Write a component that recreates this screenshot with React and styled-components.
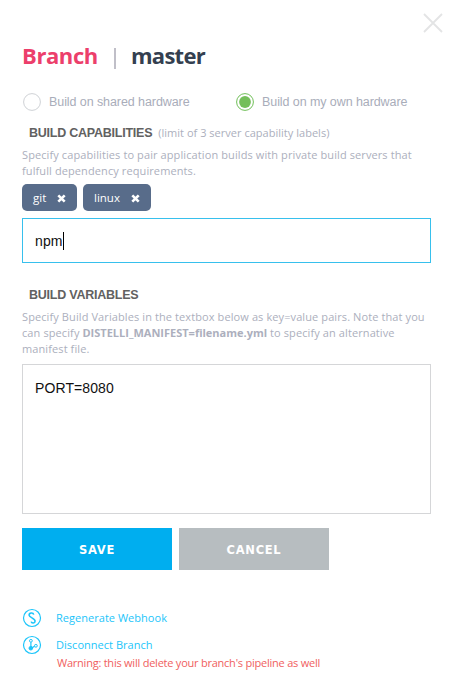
import React from "react";
import styled, { createGlobalStyle } from "styled-components";

const Global = createGlobalStyle`
  * { box-sizing: border-box; }
  body { margin: 0; background: #fff; font-family: "Open Sans", "Noto Sans", sans-serif; }
`;

const Panel = styled.main`
  width: 458px;
  height: 692px;
  padding: 13px 27px 0 22px;
  display: flex;
  flex-direction: column;
  background: #fff;
`;

const CloseButton = styled.button`
  align-self: flex-end;
  width: 20px;
  height: 20px;
  margin-right: -12px;
  padding: 0;
  border: 0;
  background: none;
  svg { display: block; }
`;

const Title = styled.h1`
  display: flex;
  align-items: center;
  height: 30px;
  margin: 7px 0 0;
  font-size: 22px;
  line-height: 30px;
  font-weight: 700;
  letter-spacing: -0.7px;
  color: #343f50;
`;

const Accent = styled.span`
  color: #ec3f6b;
  letter-spacing: -0.4px;
`;

const Divider = styled.span`
  width: 2px;
  height: 21px;
  margin: 6px 15px 0 16px;
  background: #c0bfc8;
`;

const Options = styled.div`
  display: flex;
  height: 20px;
  margin-top: 22px;
`;

const Option = styled.label`
  display: flex;
  flex: none;
  align-items: center;
  width: 213px;
  gap: 7px;
  white-space: nowrap;
  font: 12.5px/20px "Liberation Sans", Arial, sans-serif;
  letter-spacing: -0.08px;
  color: #a9adba;
  svg { flex: none; }
`;

const Heading = styled.h2`
  display: flex;
  align-items: baseline;
  gap: 6px;
  height: 18px;
  margin: ${(p) => p.$top}px 0 0 7px;
  font: 700 12.5px/18px "Liberation Sans", Arial, sans-serif;
  letter-spacing: -0.24px;
  color: #616161;
`;

const Hint = styled.span`
  font: 400 11px/18px "Open Sans", sans-serif;
  letter-spacing: 0.02px;
  color: #acafbd;
`;

const Description = styled.p`
  margin: 5px 0 0;
  font-size: 11px;
  line-height: 16px;
  letter-spacing: 0.1px;
  color: #acafbd;
  white-space: nowrap;
  b { letter-spacing: 0; }
`;

const Tags = styled.div`
  display: flex;
  gap: 6px;
  height: 27px;
  margin-top: 5px;
`;

const Tag = styled.span`
  display: flex;
  align-items: center;
  justify-content: space-between;
  width: ${(p) => p.$width}px;
  padding: 0 11px;
  border-radius: 5px;
  background: #586c8a;
  color: #fff;
  font-size: 11.5px;
  svg { display: block; margin-top: 1px; }
`;

const Field = styled.div`
  display: flex;
  align-items: ${(p) => (p.$multiline ? "flex-start" : "center")};
  width: 409px;
  height: ${(p) => (p.$multiline ? 150 : 45)}px;
  margin-top: 7px;
  padding: ${(p) => (p.$multiline ? "13px 12px" : "0 12px")};
  border: 1px solid ${(p) => (p.$focused ? "#37c0ed" : "#d5d6d8")};
  font: 14px/20px "Liberation Sans", Arial, sans-serif;
  letter-spacing: 0.1px;
  color: #111;
`;

const Caret = styled.span`
  width: 1px;
  height: 18px;
  background: #000;
`;

const Actions = styled.div`
  display: flex;
  gap: 7px;
  margin-top: 14px;
`;

const Action = styled.button`
  width: 150px;
  height: 42px;
  padding: 2px 0 0;
  border: 0;
  background: ${(p) => (p.$primary ? "#00aeef" : "#b7bdc0")};
  color: #fff;
  font: 700 11.5px/40px "DejaVu Sans", sans-serif;
  letter-spacing: 0.7px;
`;

const Links = styled.nav`
  display: flex;
  flex-direction: column;
  gap: 7px;
  margin-top: 38px;
`;

const Link = styled.a`
  display: flex;
  align-items: center;
  height: 20px;
  gap: 14px;
  font-size: 11px;
  line-height: 18px;
  letter-spacing: 0.03px;
  color: #1cc5fa;
`;

const Warning = styled.p`
  margin: 0 0 0 35px;
  font-size: 11px;
  line-height: 16px;
  letter-spacing: -0.23px;
  color: #f0605e;
`;

const Radio = ({ checked }) => (
  <svg width="20" height="20" viewBox="0 0 20 20">
    <circle cx="10" cy="10" r="8.4" fill="#fff" stroke={checked ? "#71bf59" : "#cfd2d6"} />
    {checked && <circle cx="10" cy="10" r="5.9" fill="#74bf5a" />}
  </svg>
);

const TagCross = () => (
  <svg width="9" height="9" viewBox="0 0 9 9">
    <path d="M1.3 1.3 7.7 7.7M7.7 1.3 1.3 7.7" stroke="#fff" strokeWidth="2.6" />
  </svg>
);

const WebhookIcon = () => (
  <svg width="20" height="20" viewBox="0 0 20 20" fill="none" stroke="#1cc5fa">
    <circle cx="10" cy="10" r="8.5" strokeWidth="1.2" />
    <path d="M11.7 6.6C11.2 4.3 7.1 4.5 7.1 7.2C7.1 9.3 13.2 10.6 13.1 13C13 15.6 9.6 15.6 9.2 13.6" strokeWidth="1.6" />
  </svg>
);

const BranchIcon = () => (
  <svg width="20" height="20" viewBox="0 0 20 20" fill="none" stroke="#1cc5fa">
    <circle cx="10" cy="10" r="8.5" strokeWidth="1.2" />
    <path d="M8.9 7.3V12M12.5 11.4 9.5 13" strokeWidth="1.2" />
    <circle cx="8.9" cy="5.8" r="1.4" />
    <circle cx="13.9" cy="10.8" r="1.4" />
    <circle cx="8.8" cy="13.2" r="1.8" fill="#1cc5fa" />
  </svg>
);

export default function App() {
  return (
    <>
      <Global />
      <Panel>
        <CloseButton aria-label="Close">
          <svg width="20" height="20" viewBox="0 0 20 20">
            <path d="M1 1 19 19M19 1 1 19" stroke="#e3e4e5" strokeWidth="1.8" />
          </svg>
        </CloseButton>
        <Title>
          <Accent>Branch</Accent>
          <Divider />
          <span>master</span>
        </Title>
        <Options>
          <Option><Radio />Build on shared hardware</Option>
          <Option><Radio checked />Build on my own hardware</Option>
        </Options>
        <Heading $top={12}>BUILD CAPABILITIES <Hint>(limit of 3 server capability labels)</Hint></Heading>
        <Description>
          Specify capabilities to pair application builds with private build servers that<br />
          fulfull dependency requirements.
        </Description>
        <Tags>
          <Tag $width={55}>git <TagCross /></Tag>
          <Tag $width={68}>linux <TagCross /></Tag>
        </Tags>
        <Field $focused>npm<Caret /></Field>
        <Heading $top={23}>BUILD VARIABLES</Heading>
        <Description>
          Specify Build Variables in the textbox below as key=value pairs. Note that you<br />
          can specify <b>DISTELLI_MANIFEST=filename.yml</b> to specify an alternative<br />
          manifest file.
        </Description>
        <Field $multiline>PORT=8080</Field>
        <Actions>
          <Action $primary>SAVE</Action>
          <Action>CANCEL</Action>
        </Actions>
        <Links>
          <Link><WebhookIcon />Regenerate Webhook</Link>
          <Link><BranchIcon />Disconnect Branch</Link>
        </Links>
        <Warning>Warning: this will delete your branch's pipeline as well</Warning>
      </Panel>
    </>
  );
}
